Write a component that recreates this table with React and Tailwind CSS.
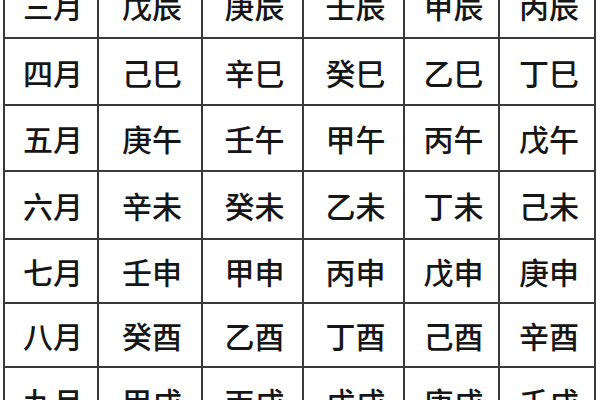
const ROWS = [
  ['三月', '戊辰', '庚辰', '壬辰', '甲辰', '丙辰'],
  ['四月', '己巳', '辛巳', '癸巳', '乙巳', '丁巳'],
  ['五月', '庚午', '壬午', '甲午', '丙午', '戊午'],
  ['六月', '辛未', '癸未', '乙未', '丁未', '己未'],
  ['七月', '壬申', '甲申', '丙申', '戊申', '庚申'],
  ['八月', '癸酉', '乙酉', '丁酉', '己酉', '辛酉'],
  ['九月', '甲戌', '丙戌', '戊戌', '庚戌', '壬戌'],
]

export default function App() {
  return (
    <div className="h-[400px] w-[600px] overflow-hidden bg-white">
      <div
        className="ml-[3px] -mt-[30px] grid w-max grid-cols-[92px_102px_99px_99px_93px_94px] grid-rows-[65px_65px_64px_66px_62px_62px_65px] gap-[2px] bg-[#3a3a3a] p-[2px] text-[30px] font-medium text-[#161616]"
        style={{ fontFamily: '"Noto Sans CJK SC", "Noto Sans", sans-serif' }}
      >
        {ROWS.flat().map((cell, i) => (
          <div key={i} className="flex items-center justify-center bg-white pl-1 leading-none">
            {cell}
          </div>
        ))}
      </div>
    </div>
  )
}
